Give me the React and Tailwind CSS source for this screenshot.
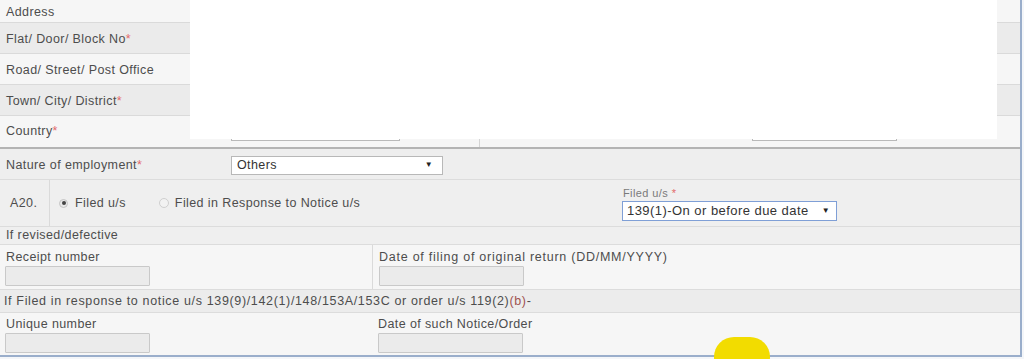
import React from "react";

const Star = () => <span className="text-[#e36a6a]">*</span>;

function Arrow() {
  return <span className="text-[8px] text-[#222] leading-none">▼</span>;
}

function Input({ w = "w-[145px]" }) {
  return <div className={`${w} h-[20px] bg-[#ebebeb] border border-[#c9c9c9] rounded-[1px]`} />;
}

export default function App() {
  const font = { fontFamily: '"Liberation Sans", Arial, sans-serif' };
  return (
    <div className="relative w-[1024px] h-[359px] overflow-hidden bg-[#f4f6f9]" style={font}>
      <div className="w-[1022px] h-[357px] border-r-2 border-b-2 border-[#9aaecb] flex flex-col text-[12.5px] tracking-[0.4px] text-[#4d4d4d] bg-[#f5f5f5]">
        {/* top address block */}
        <div className="flex flex-col">
          <div className="h-[23px] flex items-center border-b border-[#dadada] bg-[#f6f6f6]">
            <div className="w-[188px] px-[6px] pt-[2px]">Address</div>
          </div>
          <div className="h-[31px] flex items-center border-b border-[#dadada] bg-[#ebebeb]">
            <div className="w-[188px] px-[6px] pt-[3px]">Flat/ Door/ Block No<Star /></div>
          </div>
          <div className="h-[31px] flex items-center border-b border-[#dadada] bg-[#f6f6f6]">
            <div className="w-[188px] px-[6px] pt-[3px]">Road/ Street/ Post Office</div>
          </div>
          <div className="h-[31px] flex items-center border-b border-[#dadada] bg-[#ebebeb]">
            <div className="w-[188px] px-[6px] pt-[2px]">Town/ City/ District<Star /></div>
          </div>
          <div className="h-[31px] flex bg-[#f6f6f6]">
            <div className="w-[188px] px-[6px] flex items-center">Country<Star /></div>
            <div className="w-[292px] flex items-end pb-[6px] pl-[43px] border-r border-[#d4d4d4]">
              <div className="w-[169px] h-[18px] bg-white border border-[#b9b9b9]" />
            </div>
            <div className="flex-1 flex items-end pb-[6px] pl-[272px]">
              <div className="w-[145px] h-[18px] bg-white border border-[#b9b9b9]" />
            </div>
          </div>
          <div className="h-[2px] bg-[#b4b4b4]" />
        </div>

        {/* Nature of employment */}
        <div className="h-[31px] flex items-center border-b border-[#dcdcdc] bg-[#eeeeee]">
          <div className="w-[231px] px-[6px] pt-[2px]">Nature of employment<Star /></div>
          <div className="w-[212px] h-[19px] mt-[2px] bg-white border border-[#b8b8b8] flex items-center justify-between pl-[5px] pr-[9px] text-[#333]">
            <span>Others</span>
            <Arrow />
          </div>
        </div>

        {/* A20 */}
        <div className="h-[47px] flex border-b border-[#dcdcdc] bg-[#efefef]">
          <div className="w-[50px] flex items-center pl-[10px] border-r border-[#dadada]">A20.</div>
          <div className="w-[572px] flex items-center pl-[9px]">
            <span className="w-[9px] h-[9px] rounded-full bg-[#e8e8e8] border border-[#c4c4c4] flex items-center justify-center mr-[7px]">
              <span className="w-[4px] h-[4px] rounded-full bg-[#444]" />
            </span>
            <span>Filed u/s</span>
            <span className="w-[10px] h-[10px] rounded-full bg-[#f2f2f2] border border-[#cfcfcf] ml-[33px] mr-[6px]" />
            <span>Filed in Response to Notice u/s</span>
          </div>
          <div className="flex flex-col justify-center pt-[2px]">
            <div className="text-[11px] text-[#7a7a7a] leading-[12px] pl-[1px]">Filed u/s <Star /></div>
            <div className="mt-[2px] w-[215px] h-[20px] bg-white border border-[#7f9fd6] flex items-center justify-between pl-[4px] pr-[6px] text-[#333] text-[13px] tracking-[0.45px]">
              <span>139(1)-On or before due date</span>
              <Arrow />
            </div>
          </div>
        </div>

        {/* If revised */}
        <div className="h-[18px] flex items-center px-[6px] border-b border-[#dcdcdc] bg-[#efefef]">
          If revised/defective
        </div>

        {/* Receipt */}
        <div className="h-[45px] flex border-b border-[#dcdcdc] bg-[#f6f6f6]">
          <div className="w-[373px] border-r border-[#dadada] pl-[5px] pt-[6px] flex flex-col gap-[2px]">
            <div className="pl-[1px] leading-[13px]">Receipt number</div>
            <Input />
          </div>
          <div className="pl-[6px] pt-[6px] flex flex-col gap-[2px]">
            <div className="leading-[13px] tracking-[0.75px]">Date of filing of original return (DD/MM/YYYY)</div>
            <Input />
          </div>
        </div>

        {/* If filed in response */}
        <div className="h-[23px] flex items-center px-[4px] border-b border-[#dcdcdc] bg-[#ececec] text-[12.5px] tracking-[0.65px]">
          <span>If Filed in response to notice u/s 139(9)/142(1)/148/153A/153C or order u/s 119(2)<span className="text-[#a0524f]">(b)</span>-</span>
        </div>

        {/* Unique */}
        <div className="flex-1 flex bg-[#f6f6f6]">
          <div className="w-[373px] pl-[5px] pt-[5px] flex flex-col gap-[2px]">
            <div className="pl-[1px] leading-[13px]">Unique number</div>
            <Input />
          </div>
          <div className="pl-[5px] pt-[5px] flex flex-col gap-[2px]">
            <div className="leading-[13px]">Date of such Notice/Order</div>
            <Input />
          </div>
        </div>
      </div>

      {/* white overlay covering address fields */}
      <div className="absolute left-[190px] top-0 w-[807px] h-[139px] bg-white" />

      {/* yellow cursor highlight */}
      <div className="absolute left-[714px] top-[337px] w-[56px] h-[40px] rounded-full bg-[#f2dc00]" />
    </div>
  );
}
